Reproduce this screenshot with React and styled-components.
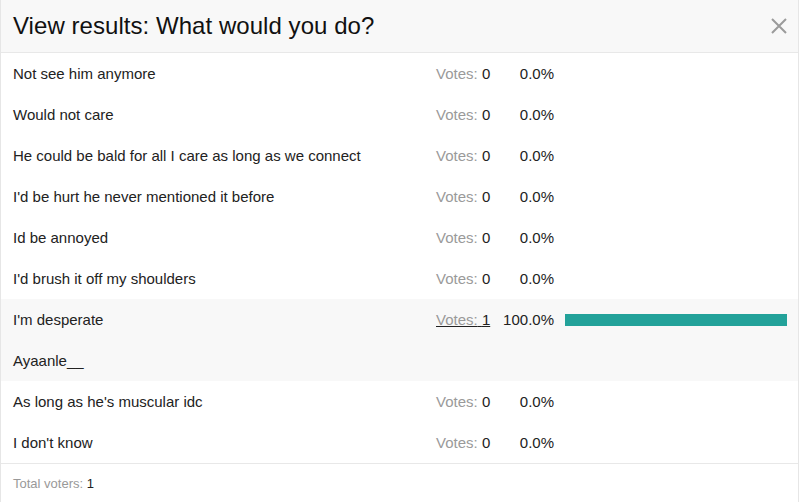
import React from "react";
import styled, { createGlobalStyle } from "styled-components";

const GlobalStyle = createGlobalStyle`
    html, body {
        margin: 0;
        padding: 0;
        background: #ffffff;
    }
    body {
        font-family: "Liberation Sans", Arial, Helvetica, sans-serif;
        color: #222222;
    }
`

const Modal = styled.div`
    box-sizing: border-box;
    width: 799px;
    height: 502px;
    background: #ffffff;
    border-left: 1px solid #e6e6e6;
    border-right: 1px solid #e6e6e6;
    overflow: hidden;
`

const Header = styled.div`
    box-sizing: border-box;
    height: 53px;
    padding: 0 10px 0 12px;
    background: #f8f8f8;
    border-bottom: 1px solid #e8e8e8;
    display: flex;
    align-items: center;
    justify-content: space-between;

    h1 {
        margin: 0;
        font-size: 24px;
        font-weight: 400;
        color: #111111;
        letter-spacing: 0.05px;
    }
`

const CloseButton = styled.button`
    border: none;
    background: none;
    padding: 0;
    width: 18px;
    height: 18px;
    display: flex;
    align-items: center;
    justify-content: center;
    cursor: pointer;
`

const Row = styled.div`
    box-sizing: border-box;
    height: 41px;
    padding: 0 11px 0 12px;
    display: grid;
    grid-template-columns: 423px 61px 57px 11px 222px;
    align-items: center;
    font-size: 15px;
    background: ${p => (p.$active ? "#f8f8f8" : "transparent")};
`

const Label = styled.div`
    color: #222222;
    white-space: nowrap;
`

const Votes = styled.span`
    color: #222222;
    text-decoration: ${p => (p.$link ? "underline" : "none")};
    cursor: ${p => (p.$link ? "pointer" : "default")};
    white-space: nowrap;

    span {
        color: #9a9a9a;
    }
`

const Percent = styled.div`
    text-align: right;
    color: #222222;
`

const Bar = styled.div`
    grid-column: 5;
    height: 12px;
    background: #23a29a;
`

const Voter = styled.div`
    box-sizing: border-box;
    height: 41px;
    padding: 0 12px;
    display: flex;
    align-items: center;
    font-size: 15px;
    color: #222222;
    background: #f8f8f8;
`

const Footer = styled.div`
    box-sizing: border-box;
    height: 39px;
    border-top: 1px solid #e8e8e8;
    padding: 0 12px;
    display: flex;
    align-items: center;
    font-size: 13px;
    color: #999999;
    white-space: pre;

    b {
        font-weight: 400;
        color: #222222;
    }
`

const options = [
    { text: "Not see him anymore", votes: 0 },
    { text: "Would not care", votes: 0 },
    { text: "He could be bald for all I care as long as we connect", votes: 0 },
    { text: "I'd be hurt he never mentioned it before", votes: 0 },
    { text: "Id be annoyed", votes: 0 },
    { text: "I'd brush it off my shoulders", votes: 0 },
    { text: "I'm desperate", votes: 1, voters: ["Ayaanle__"] },
    { text: "As long as he's muscular idc", votes: 0 },
    { text: "I don't know", votes: 0 },
]

const total = 1

function App() {
    return (
        <>
            <GlobalStyle />
            <Modal>
                <Header>
                    <h1>View results: What would you do?</h1>
                    <CloseButton aria-label="Close">
                        <svg width="16" height="16" viewBox="0 0 16 16">
                            <path d="M1 1 L15 15 M15 1 L1 15" stroke="#9b9b9b" strokeWidth="2" />
                        </svg>
                    </CloseButton>
                </Header>
                {options.map(o => {
                    const pct = total ? (o.votes / total) * 100 : 0
                    const active = o.votes > 0
                    return (
                        <React.Fragment key={o.text}>
                            <Row $active={active}>
                                <Label>{o.text}</Label>
                                <div>
                                    <Votes $link={active}><span>Votes:</span> {o.votes}</Votes>
                                </div>
                                <Percent>{pct.toFixed(1)}%</Percent>
                                {active && <Bar style={{ width: `${pct}%` }} />}
                            </Row>
                            {o.voters && o.voters.map(v => <Voter key={v}>{v}</Voter>)}
                        </React.Fragment>
                    )
                })}
                <Footer>
                    Total voters: <b>{total}</b>
                </Footer>
            </Modal>
        </>
    )
}

export default App;
